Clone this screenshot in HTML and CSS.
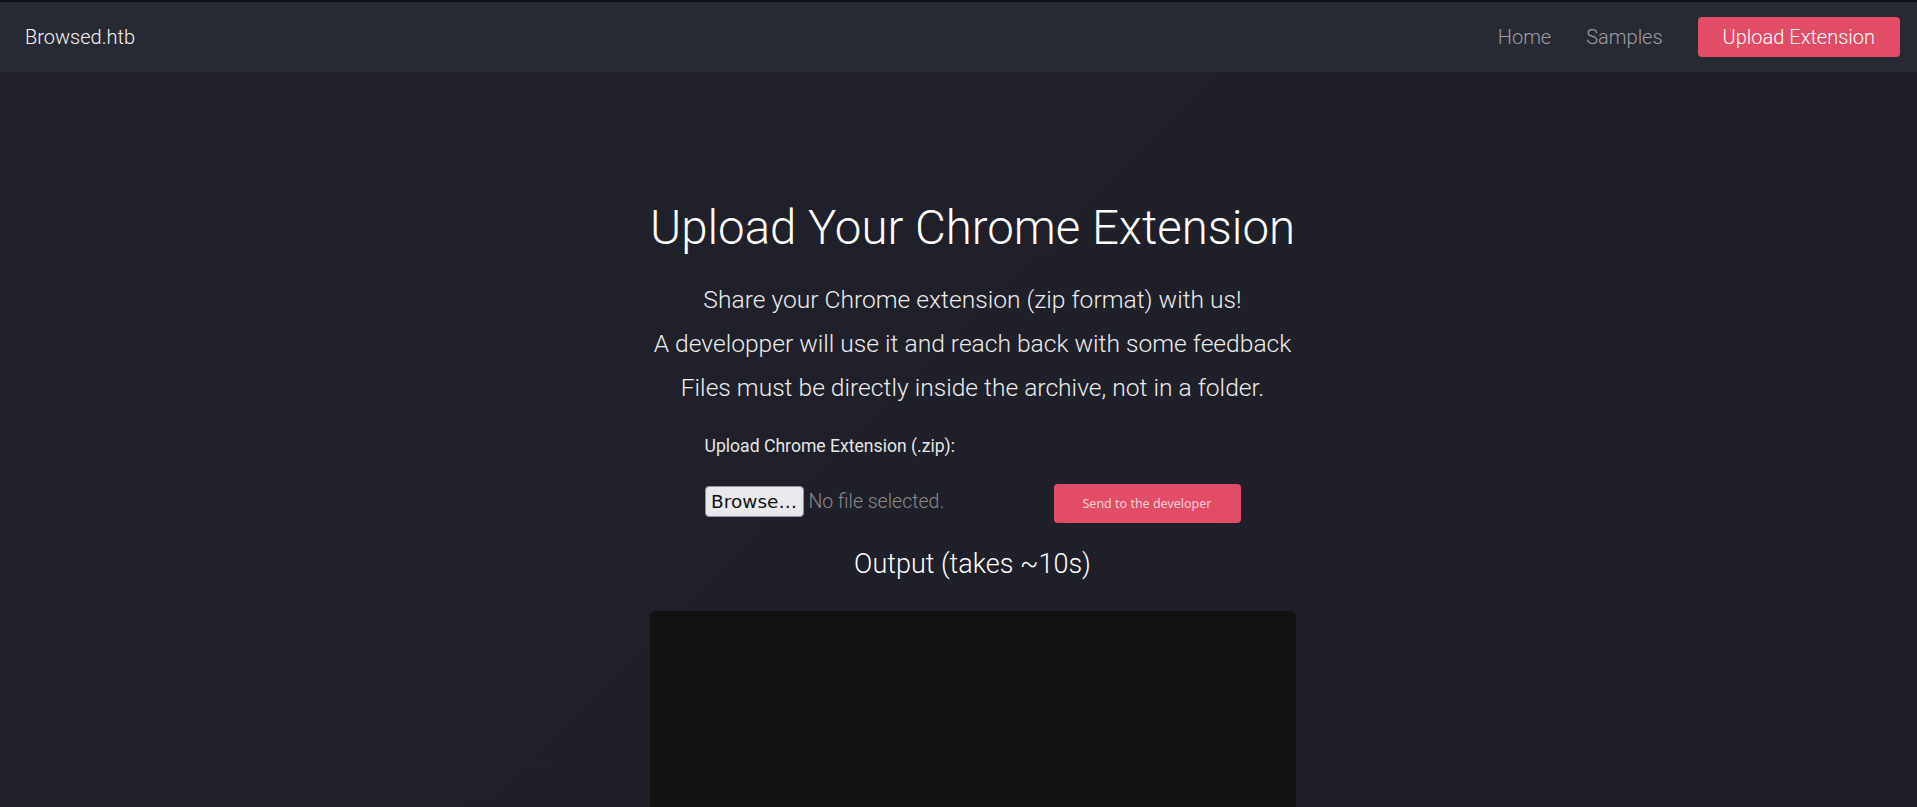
FILE: index.html
```html
<!DOCTYPE html>
<html lang="en">
<head>
    <meta charset="UTF-8">
    <meta name="viewport" content="width=device-width, initial-scale=1.0">
    <title>Browsed</title>
    <link rel="stylesheet" href="styles.css">
</head>
<body>
    <nav class="navbar">
        <a class="brand" href="#">Browsed.htb</a>
        <div class="nav-links">
            <a class="nav-link" href="#">Home</a>
            <a class="nav-link" href="#">Samples</a>
            <a class="nav-btn" href="#">Upload Extension</a>
        </div>
    </nav>

    <main class="main">
        <div class="upload-col">
            <h1 class="title">Upload Your Chrome Extension</h1>
            <p class="lead">Share your Chrome extension (zip format) with us!</p>
            <p class="lead">A developper will use it and reach back with some feedback</p>
            <p class="lead">Files must be directly inside the archive, not in a folder.</p>

            <form class="upload-form" onsubmit="return false">
                <label class="form-label" for="ext-file">Upload Chrome Extension (.zip):</label>
                <div class="form-row">
                    <div class="file-field">
                        <button type="button" class="browse-btn">Browse…</button>
                        <span class="file-name">No file selected.</span>
                    </div>
                    <button type="submit" class="send-btn">Send to the developer</button>
                </div>
            </form>

            <h4 class="output-title">Output (takes ~10s)</h4>
            <div class="output-box"></div>
        </div>
    </main>
</body>
</html>
```

FILE: styles.css
```css
html {
    background-color: #1f1f28;
}

body {
    margin: 0;
    font-family: Roboto, "Liberation Sans", sans-serif;
    color: #fff;
    background: linear-gradient(135deg, #20212a 0%, #1e1f28 50%, #1d1e26 100%);
    border-top: 2px solid #121318;
}

::-webkit-scrollbar {
    width: 1px;
}
::-webkit-scrollbar-track {
    background: transparent;
}
::-webkit-scrollbar-thumb {
    background: #a8a8a8;
}

a {
    text-decoration: none;
}

.navbar {
    display: flex;
    justify-content: space-between;
    align-items: center;
    height: 70px;
    padding: 0 17px 0 25px;
    background-color: #282a33;
}

.brand {
    color: #f4f4f4;
    font-size: 20px;
    font-weight: 300;
}

.nav-links {
    display: flex;
    align-items: center;
    gap: 35px;
}

.nav-link {
    color: #9b9da5;
    font-size: 20px;
    font-weight: 300;
}

.nav-btn {
    display: flex;
    align-items: center;
    height: 40px;
    padding: 0 25px;
    border-radius: 4px;
    background-color: #e34c67;
    color: #fff;
    font-size: 20px;
    font-weight: 300;
}

.main {
    display: flex;
    justify-content: center;
    padding: 127px 0 0 28px;
    min-height: 1500px;
}

.upload-col {
    width: 646px;
    display: flex;
    flex-direction: column;
    align-items: center;
}

.title {
    margin: 0 0 21px;
    font-size: 47.4px;
    font-weight: 300;
    line-height: 58px;
    white-space: nowrap;
}

.lead {
    margin: 0;
    font-size: 24.6px;
    font-weight: 300;
    line-height: 44px;
    white-space: nowrap;
    color: #ececec;
}

.upload-form {
    align-self: stretch;
    margin-top: 23px;
    padding-left: 55px;
}

.form-label {
    display: block;
    font-size: 17.6px;
    line-height: 27px;
    color: #e6e6e6;
}

.form-row {
    display: flex;
    align-items: flex-start;
    margin-top: 24px;
}

.file-field {
    display: flex;
    align-items: center;
    gap: 5px;
    width: 349px;
    margin-top: 2px;
}

.browse-btn {
    height: 31px;
    width: 99px;
    padding: 0;
    border: 1px solid #8f8f9d;
    border-radius: 4px;
    background-color: #e9e9ed;
    color: #111;
    font-family: "DejaVu Sans", sans-serif;
    font-size: 18.5px;
}

.file-name {
    color: #8a8a8f;
    font-size: 19.5px;
    font-weight: 300;
}

.send-btn {
    width: 187px;
    height: 39px;
    border: none;
    border-radius: 4px;
    background-color: #e34c67;
    color: #f6d0d8;
    font-family: "Noto Sans", sans-serif;
    font-size: 12.5px;
}

.output-title {
    margin: 25px 0 30px;
    font-size: 27px;
    font-weight: 300;
    line-height: 33px;
}

.output-box {
    align-self: stretch;
    height: 560px;
    border-radius: 6px;
    background-color: #121212;
}
```
